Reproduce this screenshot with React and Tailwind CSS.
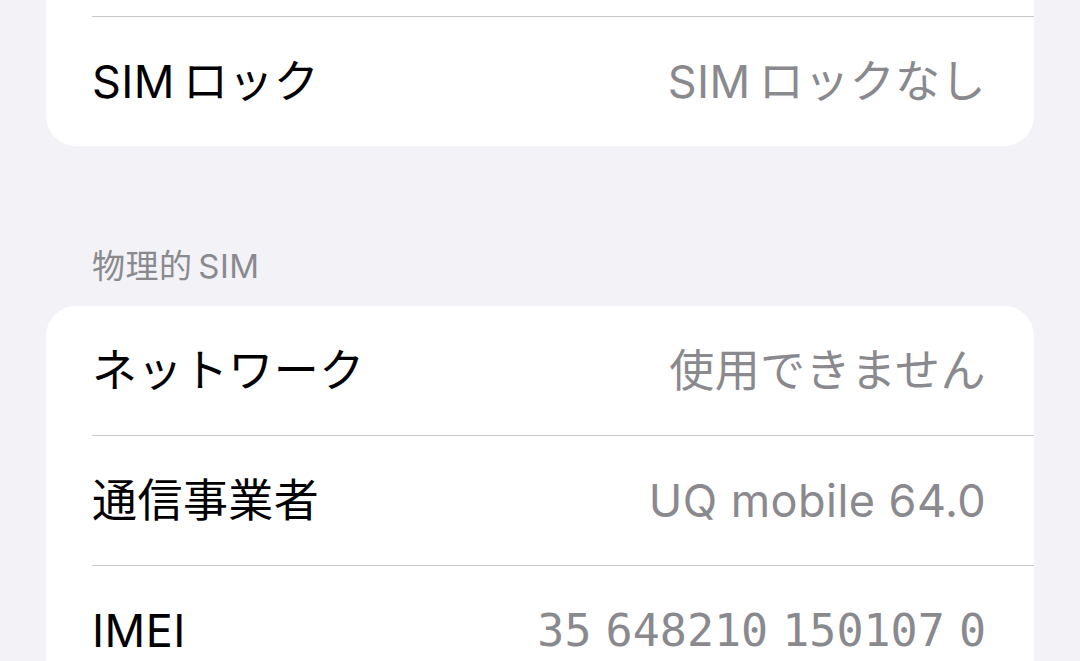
const rowText = "font-['Inter','Noto_Sans_CJK_JP',sans-serif] text-[45px] tracking-[0.01em]";

function Row({ label, value, mono }) {
  return (
    <div className="flex h-[129px] items-center justify-between pl-[46px] pr-[48px]">
      <span className="text-black">{label}</span>
      <span
        className={
          mono
            ? "font-['DejaVu_Sans_Mono',monospace] text-[45px] tracking-normal text-[#8a8a8e] [word-spacing:-13px]"
            : 'text-[#8a8a8e]'
        }
      >
        {value}
      </span>
    </div>
  );
}

function Divider() {
  return <div className="ml-[46px] h-px bg-[#c8c7cc]" />;
}

function SimText({ rest }) {
  return (
    <>
      <span className="mr-[8px]">SIM</span>
      {rest}
    </>
  );
}

export default function App() {
  return (
    <div className={`h-[661px] w-[1080px] overflow-hidden bg-[#f2f2f7] px-[46px] ${rowText}`}>
      <div className="rounded-b-[30px] bg-white">
        <div className="h-4" />
        <Divider />
        <Row label={<SimText rest="ロック" />} value={<SimText rest="ロックなし" />} />
      </div>

      <div className="h-[160px] pl-[46px] pt-[100px] text-[33px] leading-[40px] text-[#8a8a8e]">
        物理的<span className="ml-[6px]">SIM</span>
      </div>

      <div className="rounded-t-[30px] bg-white">
        <Row label="ネットワーク" value="使用できません" />
        <Divider />
        <Row label="通信事業者" value="UQ mobile 64.0" />
        <Divider />
        <Row label="IMEI" value="35 648210 150107 0" mono />
      </div>
    </div>
  );
}
